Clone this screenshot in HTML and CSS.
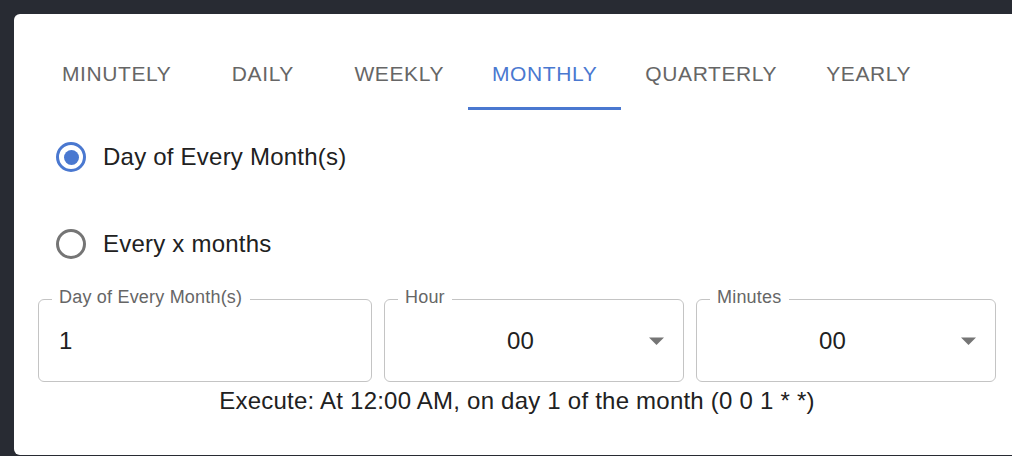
FILE: index.html
```html
<!DOCTYPE html>
<html>
<head>
<meta charset="utf-8">
<link rel="stylesheet" href="styles.css">
</head>
<body>
<div class="card">
  <div class="tabs">
    <div class="tab">Minutely</div>
    <div class="tab">Daily</div>
    <div class="tab">Weekly</div>
    <div class="tab active">Monthly</div>
    <div class="tab">Quarterly</div>
    <div class="tab">Yearly</div>
  </div>
  <div class="radios">
    <label class="radio-row">
      <span class="radio checked"><span class="dot"></span></span>
      <span class="radio-label">Day of Every Month(s)</span>
    </label>
    <label class="radio-row">
      <span class="radio"></span>
      <span class="radio-label">Every x months</span>
    </label>
  </div>
  <div class="fields">
    <div class="field">
      <span class="field-label">Day of Every Month(s)</span>
      <span class="value">1</span>
    </div>
    <div class="field select">
      <span class="field-label">Hour</span>
      <span class="value">00</span>
      <svg class="arrow" width="15" height="8" viewBox="0 0 15 8"><path d="M0 0.5 L7.5 8 L15 0.5 Z" fill="#757575"/></svg>
    </div>
    <div class="field select">
      <span class="field-label">Minutes</span>
      <span class="value">00</span>
      <svg class="arrow" width="15" height="8" viewBox="0 0 15 8"><path d="M0 0.5 L7.5 8 L15 0.5 Z" fill="#757575"/></svg>
    </div>
  </div>
  <div class="execute">Execute: At 12:00 AM, on day 1 of the month (0 0 1 * *)</div>
</div>
</body>
</html>
```
FILE: styles.css
```css
html, body {
  margin: 0;
  height: 100%;
  overflow: hidden;
}
body {
  background: #282b33;
  padding: 14px 0 0 14px;
  box-sizing: border-box;
  font-family: "Liberation Sans", Arial, sans-serif;
}
.card {
  width: 1006px;
  height: 441px;
  box-sizing: border-box;
  background: #fff;
  border-radius: 6px;
  padding: 24px 24px 0 24px;
}
.tabs {
  display: flex;
  height: 72px;
}
.tab {
  min-width: 135px;
  box-sizing: border-box;
  padding: 0 24px;
  display: flex;
  align-items: center;
  justify-content: center;
  font-size: 21px;
  letter-spacing: 0.6px;
  text-transform: uppercase;
  color: #666666;
}
.tab.active {
  color: #4a78d0;
  box-shadow: inset 0 -3px 0 #4a78d0;
}
.radios {
  display: flex;
  flex-direction: column;
  gap: 25px;
  margin-top: 16px;
}
.radio-row {
  display: flex;
  align-items: center;
  height: 62px;
  padding-left: 18px;
}
.radio {
  width: 30px;
  height: 30px;
  box-sizing: border-box;
  border: 3px solid #757575;
  border-radius: 50%;
  display: flex;
  align-items: center;
  justify-content: center;
}
.radio.checked {
  border-color: #4a78d0;
}
.dot {
  width: 15px;
  height: 15px;
  border-radius: 50%;
  background: #4a78d0;
}
.radio-label {
  margin-left: 17px;
  font-size: 24px;
  letter-spacing: 0.225px;
  color: #212121;
}
.fields {
  display: grid;
  grid-template-columns: 334px 300px 300px;
  gap: 12px;
  margin-top: 24px;
}
.field {
  position: relative;
  height: 83px;
  box-sizing: border-box;
  border: 1px solid #c4c4c4;
  border-radius: 6px;
  display: flex;
  align-items: center;
  padding: 0 20px;
}
.field-label {
  position: absolute;
  top: -12px;
  left: 12.5px;
  padding: 0 7.5px;
  background: #fff;
  font-size: 18px;
  line-height: 18px;
  letter-spacing: 0.2px;
  color: #666666;
}
.value {
  font-size: 24px;
  letter-spacing: 0.225px;
  color: #212121;
}
.select {
  padding-right: 47px;
}
.select .value {
  flex: 1;
  text-align: center;
}
.arrow {
  position: absolute;
  right: 19px;
  top: 37px;
}
.execute {
  margin-top: 1px;
  text-align: center;
  width: 958px;
  font-size: 24px;
  line-height: 36px;
  letter-spacing: 0.225px;
  color: #212121;
}
```
